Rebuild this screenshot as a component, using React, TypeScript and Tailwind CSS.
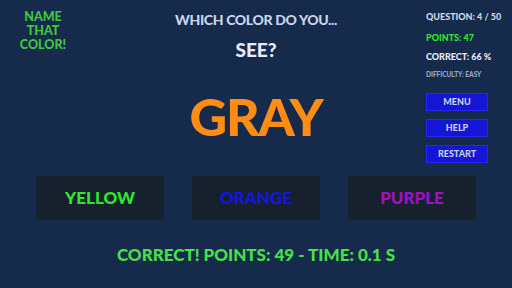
export default function App() {
  return (
    <div
      className="w-[512px] h-[288px] bg-[#162a4c] overflow-hidden flex flex-col"
      style={{ fontFamily: "Lato, 'DejaVu Sans', sans-serif" }}
    >
      {/* Top area */}
      <div className="grid grid-cols-[96px_1fr_96px] h-[170px]">
        {/* Title */}
        <div className="pt-[11px] pl-[4px]">
          <div className="w-[78px] flex flex-col items-center gap-[2px] text-[#3cc83c] font-black text-[12.5px] leading-[12px]">
            <div>NAME</div>
            <div>THAT</div>
            <div>COLOR!</div>
          </div>
        </div>

        {/* Question + word */}
        <div className="flex flex-col items-center">
          <div className="mt-[12px] text-[#c8d4ea] font-black text-[14px] leading-[16px] tracking-tight">
            WHICH COLOR DO YOU...
          </div>
          <div className="mt-[12px] text-[#e6ecf7] font-black text-[19px] leading-[20px]">SEE?</div>
          <div className="mt-[28px] text-[#ff8c14] font-black text-[52px] leading-[56px] tracking-tight">
            GRAY
          </div>
        </div>

        {/* Stats + menu */}
        <div className="pl-[10px] pt-[12px] flex flex-col">
          <div className="text-[#cfd8ea] font-black text-[9px] leading-[10px]">QUESTION: 4 / 50</div>
          <div className="mt-[11px] text-[#2ee82e] font-black text-[9px] leading-[10px]">POINTS: 47</div>
          <div className="mt-[9px] text-[#e6ecf7] font-black text-[9px] leading-[10px]">CORRECT: 66 %</div>
          <div className="mt-[9px] text-[#9aa8c8] font-black text-[6.5px] leading-[8px]">DIFFICULTY: EASY</div>
          <div className="mt-[14px] flex flex-col gap-[8px] w-[62px]">
            <div className="h-[18px] bg-[#1515d6] border border-[#2626f0] flex items-center justify-center text-[#c8d0e8] font-black text-[9px]">
              MENU
            </div>
            <div className="h-[18px] bg-[#1515d6] border border-[#2626f0] flex items-center justify-center text-[#c8d0e8] font-black text-[9px]">
              HELP
            </div>
            <div className="h-[18px] bg-[#1515d6] border border-[#2626f0] flex items-center justify-center text-[#c8d0e8] font-black text-[9px]">
              RESTART
            </div>
          </div>
        </div>
      </div>

      {/* Answers */}
      <div className="mt-[6px] flex justify-center gap-[28px]">
        <div className="w-[128px] h-[44px] bg-[#17212e] flex items-center justify-center text-[#2ee82e] font-black text-[17px]">
          YELLOW
        </div>
        <div className="w-[128px] h-[44px] bg-[#17212e] flex items-center justify-center text-[#1515e0] font-black text-[17px]">
          ORANGE
        </div>
        <div className="w-[128px] h-[44px] bg-[#17212e] flex items-center justify-center text-[#a010c8] font-black text-[17px]">
          PURPLE
        </div>
      </div>

      {/* Result */}
      <div className="mt-[25px] text-center text-[#48e048] font-black text-[17px] leading-[20px]">
        CORRECT! POINTS: 49 - TIME: 0.1 S
      </div>
    </div>
  );
}
